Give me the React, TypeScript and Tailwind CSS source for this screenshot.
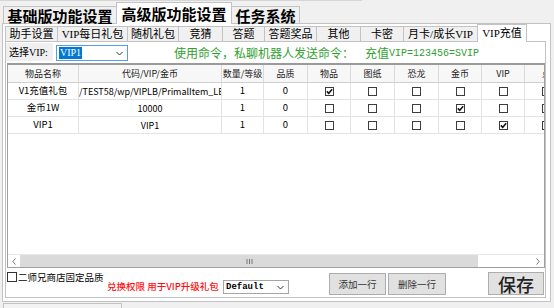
import React from "react";

const sim = "font-['Liberation_Serif','Noto_Sans_CJK_SC',serif]";
const ui = "font-['Noto_Sans_CJK_SC',sans-serif]";

type Row = { name: string; code: string; qty: string; quality: string; checks: boolean[] };

const rows: Row[] = [
  { name: "V1充值礼包", code: ":/TEST58/wp/VIPLB/PrimalItem_LE", qty: "1", quality: "0", checks: [true, false, false, false, false, false] },
  { name: "金币1W", code: "10000", qty: "1", quality: "0", checks: [false, false, false, true, false, false] },
  { name: "VIP1", code: "VIP1", qty: "1", quality: "0", checks: [false, false, false, false, true, false] },
];

const heads = ["物品名称", "代码/VIP/金币", "数量/等级", "品质", "物品", "图纸", "恐龙", "金币", "VIP"];

const innerTabs: { label: string; w: string }[] = [
  { label: "助手设置", w: "w-[53px]" },
  { label: "VIP每日礼包", w: "w-[71px]" },
  { label: "随机礼包", w: "w-[52px]" },
  { label: "竞猜", w: "w-[45px]" },
  { label: "答题", w: "w-[43px]" },
  { label: "答题奖品", w: "w-[53px]" },
  { label: "其他", w: "w-[45px]" },
  { label: "卡密", w: "w-[44px]" },
  { label: "月卡/成长VIP", w: "w-[75px]" },
];

function Check({ checked }: { checked?: boolean }) {
  return (
    <span className="flex h-[9px] w-[9px] shrink-0 items-center justify-center border border-[#3c3c3c] bg-white">
      {checked && (
        <svg width="7" height="7" viewBox="0 0 7 7">
          <path d="M0.8 3.4 L2.7 5.3 L6.2 1.2" stroke="#111" strokeWidth="1.5" fill="none" />
        </svg>
      )}
    </span>
  );
}

function Chevron() {
  return (
    <svg width="7" height="5" viewBox="0 0 7 5">
      <path d="M0.5 1 L3.5 4 L6.5 1" stroke="#333" strokeWidth="1" fill="none" />
    </svg>
  );
}

export default function App() {
  const cell = "flex items-center justify-center whitespace-nowrap border-r border-b border-[#e3e3e3]";
  return (
    <div className={`relative h-[308px] w-[554px] overflow-hidden bg-[#f0f0f0] text-black ${ui}`}>
      {/* bits of the window above, cut off */}
      <div className="absolute left-0 top-0 h-px w-[362px] bg-[#d6d6d6]" />
      <div className="absolute left-[437px] top-[-12px] text-[12px] leading-[12px] text-[#2f9f2f]">注意先保存设置</div>

      {/* outer tabs */}
      <div className="flex h-[23px] items-end pl-[3px]">
        <div className={`flex h-[17px] w-[114px] items-center justify-center border border-b-0 border-[#c3c3c3] bg-[#f0f0f0] text-[15px] font-bold leading-none ${ui}`}>
          基础版功能设置
        </div>
        <div className={`relative z-10 -mb-px -ml-px flex h-[22px] w-[116px] items-center justify-center border border-b-0 border-[#c3c3c3] bg-white text-[15px] font-bold leading-none ${ui}`}>
          高级版功能设置
        </div>
        <div className={`-ml-px flex h-[17px] w-[69px] items-center justify-center border border-b-0 border-[#c3c3c3] bg-[#f0f0f0] text-[15px] font-bold leading-none ${ui}`}>
          任务系统
        </div>
      </div>

      {/* outer page */}
      <div className="ml-[2px] flex h-[279px] w-[549px] flex-col border border-[#c3c3c3] bg-white pl-[2px] pr-[4px]">
        {/* inner tabs */}
        <div className={`flex h-[17px] items-end text-[11px] leading-none ${sim}`}>
          {innerTabs.map((t, i) => (
            <div
              key={t.label}
              className={`${t.w} ${i > 0 ? "-ml-px" : ""} flex h-[15px] items-center justify-center border border-b-0 border-[#c3c3c3] bg-[#f0f0f0]`}
            >
              {t.label}
            </div>
          ))}
          <div className="relative z-10 -mb-px -ml-px flex h-[18px] w-[50px] items-center justify-center border border-b-0 border-[#c3c3c3] bg-white">
            VIP充值
          </div>
        </div>

        {/* inner panel */}
        <div className="flex h-[257px] w-[541px] flex-col border border-[#c3c3c3] bg-white">
          <div className="flex h-[21px] items-start">
            <div className={`mt-[1px] flex h-[18px] w-[47px] items-center pl-[3px] text-[10px] bg-[#f0f0f0] ${sim}`}>选择VIP:</div>
            <div className="ml-[3px] mt-[3px] flex h-[16px] w-[72px] items-center justify-between border border-[#569de5] bg-white pl-[2px] pr-[4px]">
              <span className={`bg-[#0078d7] px-px text-[10px] leading-[12px] text-white ${sim}`}>VIP1</span>
              <Chevron />
            </div>
            <div className="ml-[46px] mt-[3px] flex h-[16px] items-center text-[#2f9f2f]">
              <span className={`text-[12px] ${ui}`}>使用命令，私聊机器人发送命令：</span>
              <span className={`ml-[11px] text-[12px] ${ui}`}>充值</span>
              <span className="font-['Liberation_Mono',monospace] text-[10px]">VIP=123456=SVIP</span>
            </div>
          </div>

          {/* data grid */}
          <div className="ml-px flex h-[205px] w-[538px] flex-col border border-t-2 border-[#a0a0a0] border-t-[#9a9a9a] text-[9.5px] leading-none">
            <div className="grid h-[18px] grid-cols-[71px_143px_42px_44px_43px_44px_44px_43px_43px_19px] bg-[#f7f7f7] text-[9px] text-[#222]">
              {heads.map((h) => (
                <div key={h} className={`${cell} border-b-[#cfcfcf] border-r-[#dadada]`}>{h}</div>
              ))}
              <div className="overflow-hidden border-b border-[#cfcfcf]">
                <div className="flex h-full w-[43px] items-center justify-center">点</div>
              </div>
            </div>
            {rows.map((r) => (
              <div key={r.name} className="grid h-[17px] grid-cols-[71px_143px_42px_44px_43px_44px_44px_43px_43px_19px]">
                <div className={cell}>{r.name}</div>
                <div className={`${cell} overflow-hidden text-[9px]`}>{r.code}</div>
                <div className={cell}>{r.qty}</div>
                <div className={cell}>{r.quality}</div>
                {r.checks.slice(0, 5).map((c, i) => (
                  <div key={i} className={cell}>
                    <Check checked={c} />
                  </div>
                ))}
                <div className="overflow-hidden border-b border-[#e3e3e3]">
                  <div className="flex h-full w-[43px] items-center justify-center">
                    <Check checked={r.checks[5]} />
                  </div>
                </div>
              </div>
            ))}
            <div className="flex-1" />
            {/* horizontal scrollbar */}
            <div className="flex h-[13px] border-t border-[#e8e8e8] bg-[#f5f5f5]">
              <div className="flex w-[12px] items-center justify-center bg-white">
                <svg width="4" height="7" viewBox="0 0 4 7"><path d="M3.5 0.5 L0.8 3.5 L3.5 6.5" stroke="#777" fill="none" /></svg>
              </div>
              <div className="flex w-[458px] items-center justify-center bg-[#dadada]">
                <svg width="7" height="5" viewBox="0 0 7 5">
                  <path d="M1 0 V5 M3.5 0 V5 M6 0 V5" stroke="#777" strokeWidth="1" />
                </svg>
              </div>
              <div className="flex-1 bg-white" />
              <div className="flex w-[12px] items-center justify-center bg-white">
                <svg width="4" height="7" viewBox="0 0 4 7"><path d="M0.5 0.5 L3.2 3.5 L0.5 6.5" stroke="#777" fill="none" /></svg>
              </div>
            </div>
          </div>

          {/* bottom controls */}
          <div className="flex h-[29px] items-start pl-px">
            <div className="mt-[4px] flex w-[100px] items-center gap-[1px]">
              <span className="h-[10px] w-[10px] border border-[#333] bg-white" />
              <span className="text-[9.5px] leading-[10px]">二师兄商店固定品质</span>
            </div>
            <div className="mt-[13px] w-[116px] text-[9.5px] font-medium leading-[11px] text-[#ff1010]">兑换权限 用于VIP升级礼包</div>
            <div className="mt-[12px] flex h-[14px] w-[66px] items-center justify-between border border-[#a5a5a5] bg-white pl-[2px] pr-[4px]">
              <span className="font-['Liberation_Mono',monospace] text-[9px] font-bold leading-none">Default</span>
              <Chevron />
            </div>
            <button className="ml-[40px] mt-[5px] flex h-[22px] w-[57px] items-center justify-center border border-[#adadad] bg-[#e1e1e1] text-[9.5px] text-[#333]">
              添加一行
            </button>
            <button className="ml-[2px] mt-[5px] flex h-[22px] w-[58px] items-center justify-center border border-[#adadad] bg-[#e1e1e1] text-[9.5px] text-[#333]">
              删除一行
            </button>
            <button className="ml-[42px] mt-[4px] flex h-[23px] w-[56px] items-center justify-center border border-[#adadad] bg-[#e1e1e1] text-[18px] font-medium leading-none text-[#222]">
              保存
            </button>
          </div>
        </div>
      </div>

      {/* panel below, cut off */}
      <div className="ml-[3px] mt-[1px] h-[10px] w-[119px] border border-[#c3c3c3] bg-[#f3f3f3]" />
    </div>
  );
}
